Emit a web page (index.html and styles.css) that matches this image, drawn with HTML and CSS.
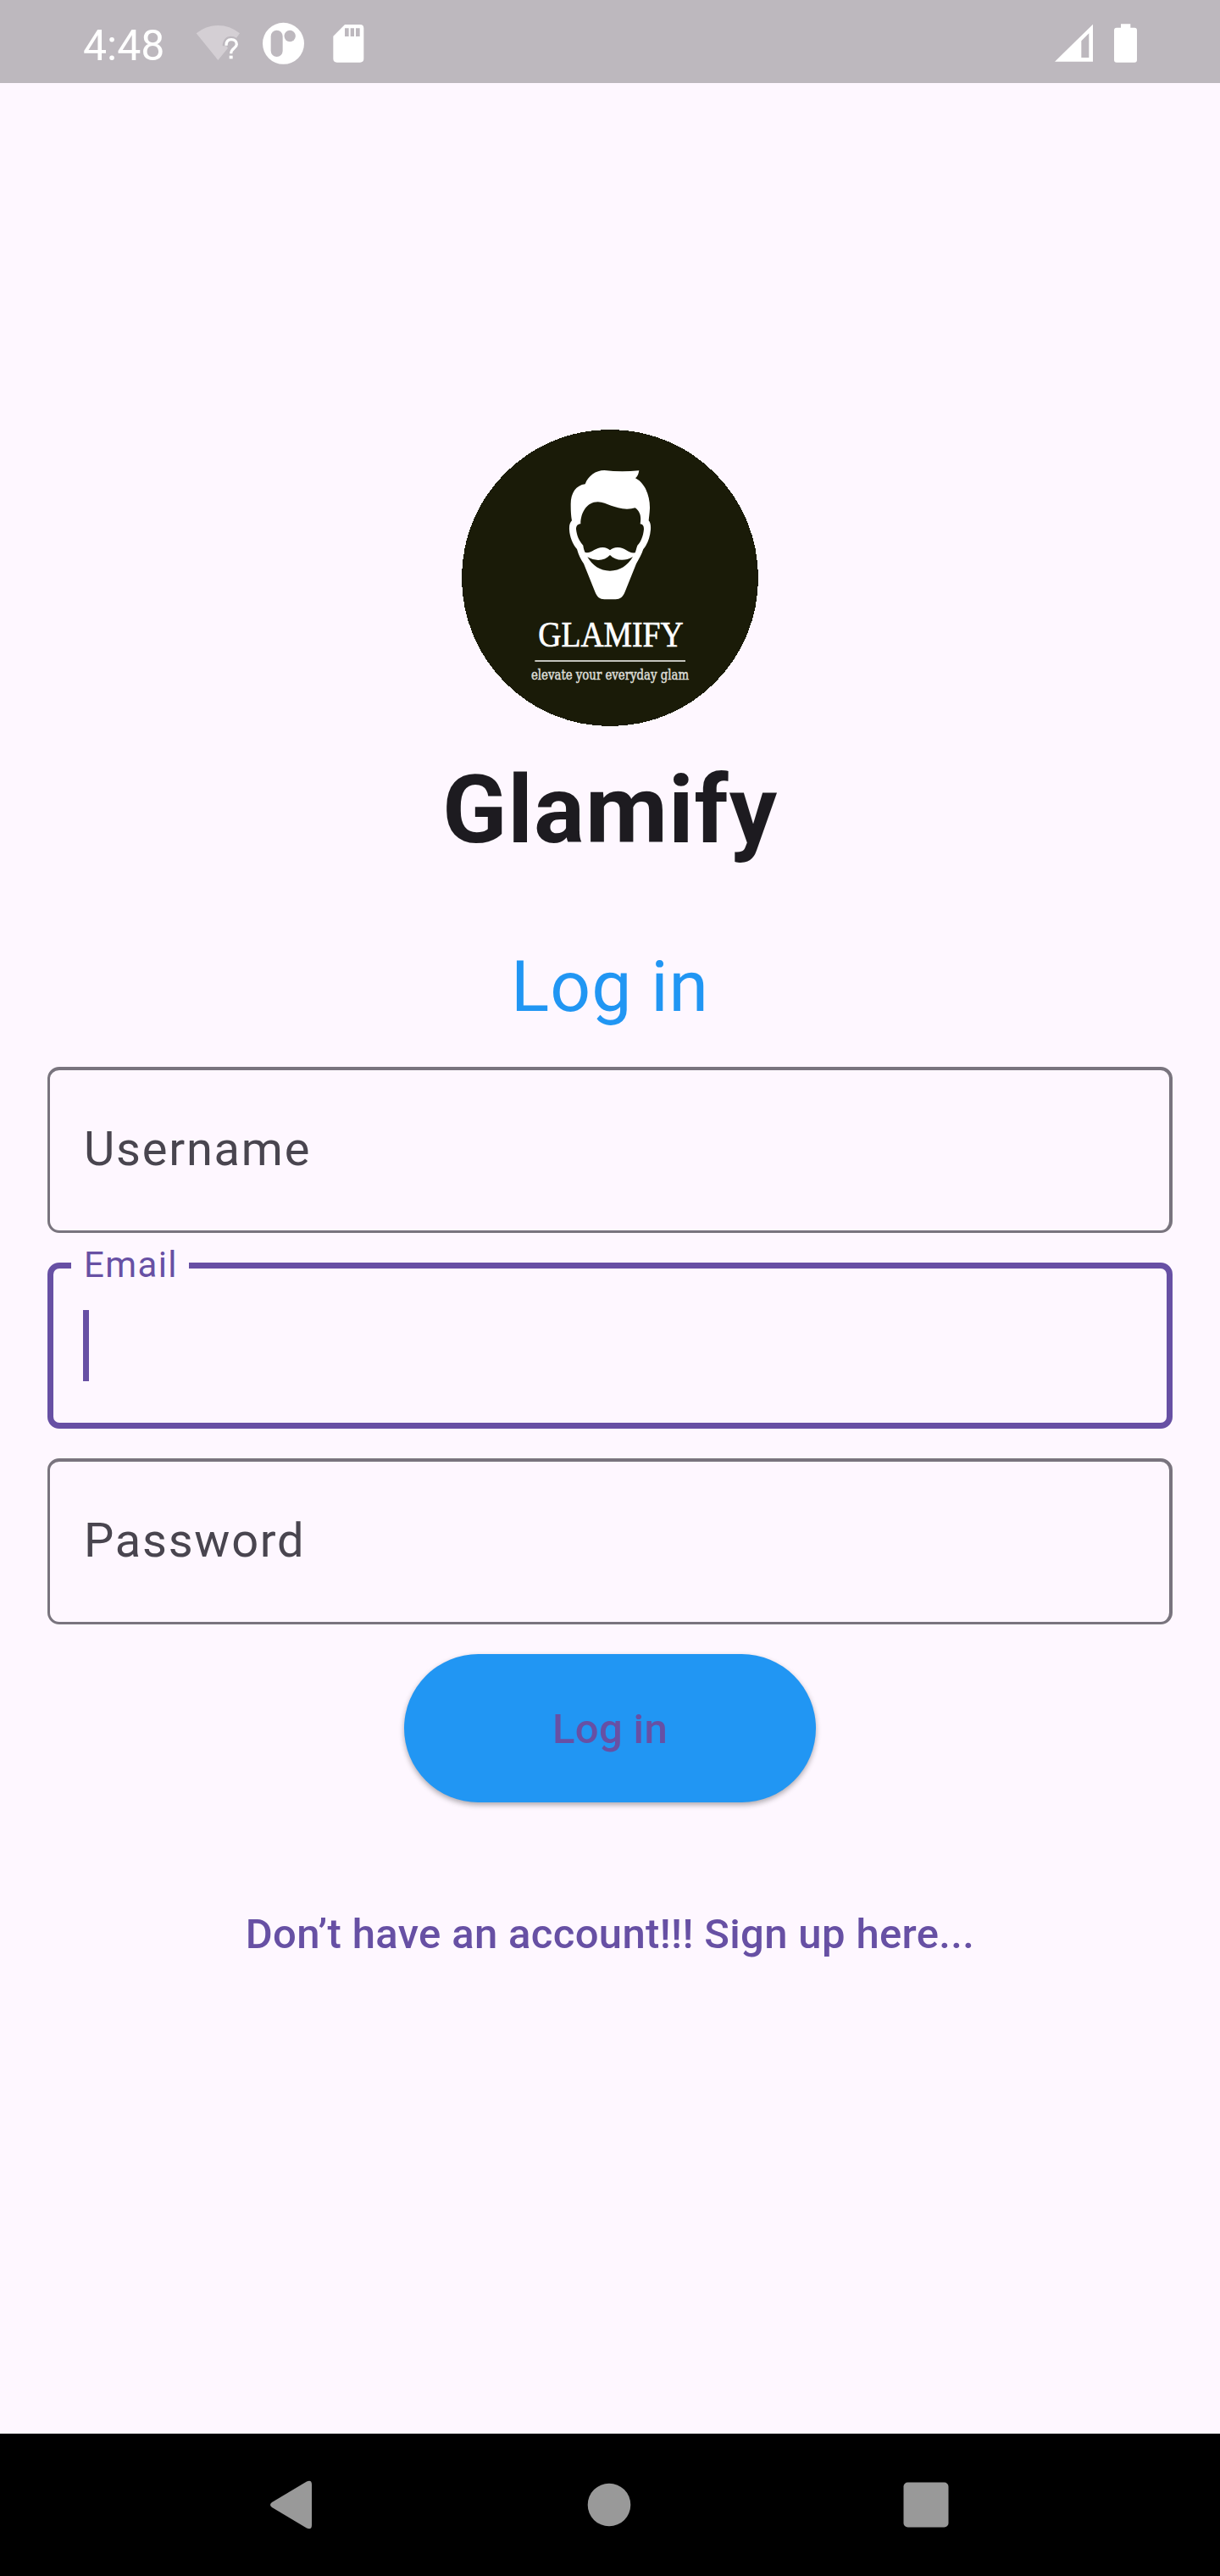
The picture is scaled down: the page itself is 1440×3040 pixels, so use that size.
FILE: index.html
```html
<!DOCTYPE html>
<html lang="en">
<head>
<meta charset="utf-8">
<title>Glamify</title>
<link rel="stylesheet" href="styles.css">
</head>
<body>
<header class="status">
  <span class="clock">4:48</span>
  <svg class="wifi" width="55" height="52" viewBox="450 75 165 156">
    <path d="M455 118Q490 90 532 90T609 118L597 134Q589 128 578 128C560 128 548 142 548 163H562L567 170L532 213Z" fill="#d4cfd4"/>
    <path d="M561 161C561 146 568 140 579 140C591 140 598 147 598 157C598 171 578 170 578 190" fill="none" stroke="#fff" stroke-width="10"/>
    <path d="M572 197h12v11h-12z" fill="#fff"/>
  </svg>
  <svg class="app" width="49" height="52" viewBox="690 75 147 156">
    <circle cx="763.500" cy="154" r="73.500" fill="#fff"/>
    <rect x="719" y="107" width="42" height="94" rx="21" fill="#bdb8be"/>
    <circle cx="786.500" cy="127.500" r="20" fill="#bdb8be"/>
  </svg>
  <svg class="sd" width="37" height="52" viewBox="939 75 111 156">
    <path fill="#fff" fill-rule="evenodd" d="M981 87H1035Q1048 87 1048 100V208Q1048 221 1035 221H953Q940 221 940 208V128ZM981 100V129H995V100ZM1001 100V129H1014V100ZM1020 100V129H1034V100Z"/>
  </svg>
  <svg class="signal" width="46" height="52" viewBox="75 75 138 156">
    <path fill="#fff" fill-rule="evenodd" d="M75 218L210 86V218ZM169 145V204H196V118Z"/>
  </svg>
  <svg class="battery" width="29" height="52" viewBox="282 75 87 156">
    <path fill="#fff" d="M309 85H343V98H357Q366 98 366 107V212Q366 221 357 221H294Q285 221 285 212V107Q285 98 294 98H309Z"/>
  </svg>
</header>

<main class="screen">
  <svg class="logo" width="350" height="350" viewBox="45 51 1050 1050">
    <circle cx="570" cy="576" r="525" fill="#1a1b08" shape-rendering="crispEdges"/>
    <path fill="#fff" fill-rule="evenodd" d="M482 244C492 215 520 195 550 195C590 200 630 200 673 196C671 208 668 217 660 223C697 242 712 290 711 330C710 350 708 362 707 373C713 380 715 390 714 405C712 432 702 458 688 474C681 495 672 510 663 526L622 628C616 643 605 652 590 652H550C534 652 524 643 518 628L477 526C466 510 459 495 453 474C438 458 427 430 426 405C425 390 428 380 435 373C432 355 431 340 431 315C431 275 450 248 482 244ZM466 385C466 345 488 307 527 307C560 309 585 332 630 332C642 332 650 330 659 328C678 342 681 360 677 385C686 386 690 392 690 403C688 427 679 450 667 461C663 472 662 480 659 487C635 490 625 468 597 468C585 468 576 473 570 478C563 473 556 468 544 468C517 468 506 490 482 486C478 478 476 470 475 461C460 445 452 425 450 403C450 392 456 385 466 385ZM490 502C520 519 552 515 570 495C588 515 622 519 651 501C632 532 606 551 570 551C534 551 508 532 490 502Z"/>
    <text class="logo-name" x="316" y="818" textLength="514" lengthAdjust="spacingAndGlyphs">GLAMIFY</text>
    <path d="M304 870H837" stroke="#c3c3bc" stroke-width="6"/>
    <text class="logo-tag" x="291" y="936" textLength="558" lengthAdjust="spacingAndGlyphs">elevate your everyday glam</text>
  </svg>
  <h1 class="brand">Glamify</h1>
  <h2 class="title">Log in</h2>
  <form class="form">
    <div class="field"><span class="placeholder">Username</span></div>
    <div class="field focused"><span class="label">Email</span><i class="caret"></i></div>
    <div class="field"><span class="placeholder">Password</span></div>
    <button class="submit" type="button">Log in</button>
  </form>
  <a class="signup">Don’t have an account!!! Sign up here...</a>
</main>

<nav class="navbar">
  <svg width="54" height="60" viewBox="0 0 54 60"><path fill="#999" d="M3 27L44 2.500Q50 0 50 6V54Q50 60 44 57.500L3 33Q-1 30 3 27Z"/></svg>
  <svg width="52" height="52" viewBox="0 0 52 52"><circle cx="26" cy="26" r="25.300" fill="#999"/></svg>
  <svg width="54" height="54" viewBox="0 0 54 54"><rect x=".5" y=".5" width="53" height="53" rx="5" fill="#999"/></svg>
</nav>
</body>
</html>
```
FILE: styles.css
```css
* { box-sizing: border-box; }

body {
  margin: 0;
  width: 1440px;
  height: 3040px;
  display: flex;
  flex-direction: column;
  background: #fef7ff;
  font-family: Roboto, sans-serif;
  color: #1d1b20;
}

svg { display: block; flex: none; }

.status {
  height: 98px;
  flex: none;
  display: flex;
  align-items: flex-start;
  padding: 25px 97px 0 98px;
  background: #bdb8be;
  color: #fff;
}

.clock {
  width: 132px;
  font-size: 50px;
  line-height: 58px;
}

.app { margin-left: 25px; }
.sd { margin-left: 34px; }
.signal { margin-left: auto; }
.battery { margin-left: 23px; }

.screen {
  flex: 1;
  display: flex;
  flex-direction: column;
  align-items: center;
  padding: 409px 56px 0;
}

.logo-name {
  font-family: "Liberation Serif", serif;
  font-size: 126px;
  fill: #fff;
  stroke: #fff;
  stroke-width: 2px;
}

.logo-tag {
  font-family: "DejaVu Serif Condensed", "DejaVu Serif", serif;
  font-size: 49px;
  fill: #dcdcd6;
  stroke: #dcdcd6;
  stroke-width: 1.5px;
}

.brand {
  margin: 33px 0 0;
  font-size: 112px;
  line-height: 132px;
  font-weight: 700;
  letter-spacing: 1px;
}

.title {
  margin: 93px 0 44px;
  font-size: 84px;
  line-height: 100px;
  font-weight: 400;
  letter-spacing: 1px;
  color: #2196f3;
}

.form {
  width: 100%;
  display: flex;
  flex-direction: column;
  align-items: center;
  gap: 35px;
}

.field {
  position: relative;
  width: 100%;
  height: 196px;
  display: flex;
  align-items: center;
  padding: 0 40px 3px;
  border: solid #79747e;
  border-width: 4px 4px 3px 3px;
  border-radius: 14px;
}

.placeholder {
  font-size: 56px;
  line-height: 84px;
  letter-spacing: 1.75px;
  color: #49454f;
}

.focused {
  padding: 0 35px;
  border: 7px solid #6750a4;
}

.label {
  position: absolute;
  left: 21px;
  top: -32px;
  width: 139px;
  padding-left: 15px;
  background: #fef7ff;
  font-size: 42px;
  line-height: 56px;
  letter-spacing: 1.4px;
  color: #6750a4;
}

.caret {
  width: 7px;
  height: 84px;
  background: #6750a4;
}

.submit {
  width: 486px;
  height: 175px;
  padding: 2px 0 0;
  border: 0;
  border-radius: 88px;
  background: #2196f3;
  box-shadow: 0 3px 6px rgba(0, 0, 0, .32);
  font: 500 49px/58px Roboto, sans-serif;
  letter-spacing: .35px;
  color: #6750a4;
}

.signup {
  margin-top: 127px;
  font-size: 49px;
  line-height: 58px;
  font-weight: 500;
  letter-spacing: .35px;
  color: #6750a4;
}

.navbar {
  height: 168px;
  flex: none;
  display: flex;
  align-items: center;
  justify-content: space-between;
  padding: 0 320px 0 318px;
  background: #000;
}
```
